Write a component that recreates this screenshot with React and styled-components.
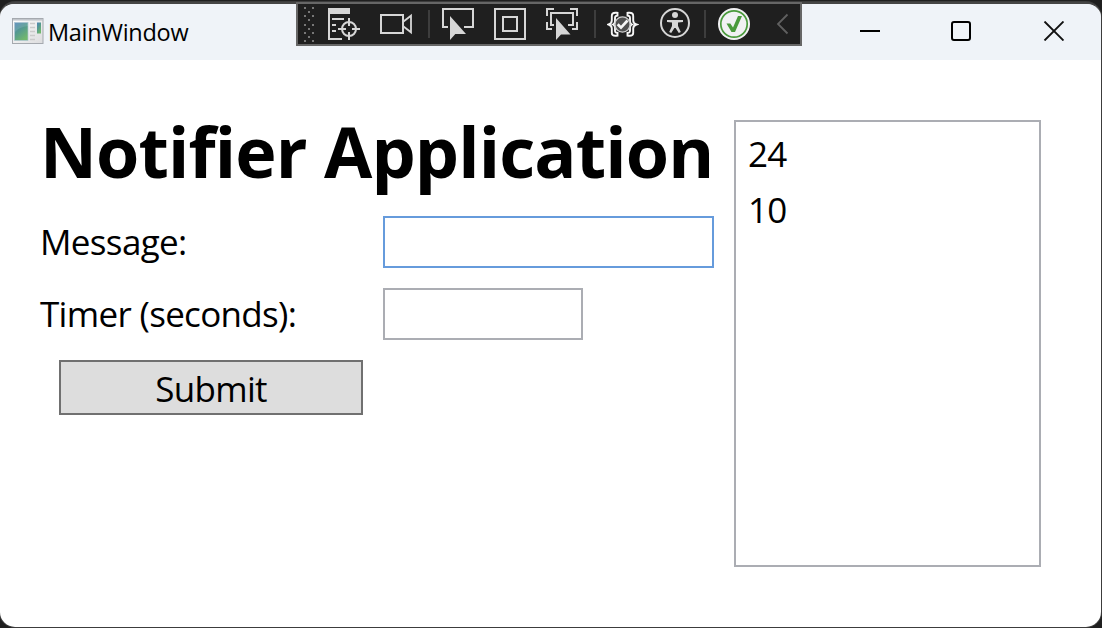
import React from "react";
import styled, { createGlobalStyle } from "styled-components";

const GlobalStyle = createGlobalStyle`
  * { box-sizing: border-box; }
  body {
    margin: 0;
    background: #1f1f1f;
    font-family: "Open Sans", "Noto Sans", sans-serif;
    color: #000;
    overflow: hidden;
  }
`;

const Desktop = styled.div`
  width: 1102px;
  height: 628px;
  padding: 2px 1px 1px 0;
  background: #1f1f1f;
`;

const Window = styled.main`
  position: relative;
  height: 625px;
  border-top: 2px solid #454545;
  border-radius: 15px 15px 15px 15px;
  background: #fff;
  box-shadow: 0 0 0 1px #3c3c3c;
`;

const TitleBar = styled.header`
  display: flex;
  align-items: center;
  justify-content: space-between;
  height: 56px;
  padding: 0 37px 2px 12px;
  background: #eff3f8;
  border-radius: 14px 14px 0 0;
`;

const Caption = styled.div`
  display: flex;
  align-items: center;
  gap: 4px;
`;

const CaptionText = styled.span`
  font-size: 23.5px;
  line-height: 32px;
  padding-top: 2px;
  letter-spacing: ${(p) => p.$spacing}px;
`;

const WindowControls = styled.div`
  display: flex;
  gap: 71px;
  align-items: center;
  svg { display: block; }
`;

const DebugToolbar = styled.div`
  position: absolute;
  left: 296px;
  top: -2px;
  width: 506px;
  height: 44px;
  display: flex;
  align-items: center;
  padding-left: 6px;
  background: #1f1f1f;
  border: 2px solid #666;
`;

const ToolIcon = styled.svg`
  display: block;
  flex: none;
  width: 32px;
  height: 32px;
  margin-left: ${(p) => p.$gap}px;
  fill: none;
  stroke: #d6d6d6;
  stroke-width: 2;
`;

const Divider = styled.span`
  flex: none;
  width: 2px;
  height: 28px;
  margin-left: ${(p) => p.$gap}px;
  background: #3d3d3d;
`;

const Content = styled.section`
  display: flex;
  gap: 20px;
  padding: 43px 60px 0 40px;
`;

const Form = styled.form`
  width: 674px;
`;

const Heading = styled.h1`
  margin: 0 0 17px;
  font-size: 70px;
  line-height: 96px;
  font-weight: 700;
  white-space: nowrap;
  letter-spacing: ${(p) => p.$spacing}px;
`;

const Field = styled.div`
  display: grid;
  grid-template-columns: 343px auto;
  justify-content: start;
  height: 52px;
  margin-bottom: 20px;
`;

const Label = styled.label`
  font-size: 35px;
  line-height: 51px;
  white-space: nowrap;
  letter-spacing: ${(p) => p.$spacing}px;
`;

const TextBox = styled.input`
  width: ${(p) => p.$width}px;
  height: 52px;
  border: 2px solid ${(p) => (p.$active ? "#669bdc" : "#abadb3")};
  border-radius: 0;
  outline: none;
  background: #fff;
  padding: 0 6px;
  font: inherit;
  font-size: 35px;
`;

const SubmitButton = styled.button`
  display: block;
  width: 304px;
  height: 55px;
  margin-left: 19px;
  padding: 2px 0 0;
  border: 2px solid #707070;
  border-radius: 0;
  background: #ddd;
  color: #000;
  font-family: inherit;
  font-size: 35px;
  line-height: 47px;
  letter-spacing: ${(p) => p.$spacing}px;
`;

const ListBox = styled.ul`
  width: 307px;
  height: 447px;
  margin: 17px 0 0;
  padding: 4px 12px;
  border: 2px solid #abadb3;
  list-style: none;
`;

const ListItem = styled.li`
  height: 56px;
  font-size: 35px;
  line-height: 56px;
  letter-spacing: ${(p) => p.$spacing}px;
`;

const gripDots = [];
for (let i = 0; i < 5; i += 1) {
  const y = Math.round(i * 8.25);
  gripDots.push([0, y], [8, y]);
  if (i < 4) gripDots.push([4, y + 4]);
}

function AppIcon() {
  return (
    <svg width="32" height="26" viewBox="0 0 32 26">
      <defs>
        <linearGradient id="screen" x1="0" y1="0" x2="0.6" y2="1">
          <stop offset="0" stopColor="#4f84b8" />
          <stop offset="0.5" stopColor="#559a8f" />
          <stop offset="1" stopColor="#71b86d" />
        </linearGradient>
        <linearGradient id="frame" x1="0" y1="0" x2="1" y2="1">
          <stop offset="0" stopColor="#fff" />
          <stop offset="1" stopColor="#dcdcde" />
        </linearGradient>
      </defs>
      <rect x="0.5" y="0.5" width="30.5" height="25" fill="url(#frame)" stroke="#a5a9af" />
      <path d="M1 1.8H31" stroke="#bcc0c7" strokeWidth="1.4" />
      <rect x="2.5" y="4.5" width="13.5" height="18" fill="url(#screen)" stroke="#b0c8d4" strokeWidth=".7" />
      <path d="M3 14Q7 9 16 8V5H3Z" fill="#fff" opacity=".12" />
      <path d="M18 5.5h5M18 9.5h5M18 13.5h5M18 17.5h5M18 21.5h5" stroke="#cbcbcb" strokeWidth="1.4" />
      <rect x="25" y="4.5" width="4" height="11" fill="url(#screen)" />
    </svg>
  );
}

function Toolbar() {
  return (
    <DebugToolbar>
      <svg width="10" height="35" viewBox="0 0 10 35" fill="#777">
        {gripDots.map(([x, y]) => (
          <rect key={`${x}-${y}`} x={x} y={y} width="2" height="2" />
        ))}
      </svg>
      <ToolIcon $gap={14} viewBox="0 0 32 32">
        <path d="M0 0H22V6H2V30H14V32H0Z" fill="#d6d6d6" stroke="none" />
        <path d="M4 11H16M4 17H8M4 23H8" />
        <circle cx="21" cy="21" r="7" />
        <path d="M10 21H18M24 21H32M21 10V18M21 24V32" />
      </ToolIcon>
      <ToolIcon $gap={20} viewBox="0 0 32 32">
        <rect x="1" y="7" width="22" height="18" />
        <path d="M23.5 13.5L31 7.7V24.3L23.5 18.5" strokeWidth="1.8" />
      </ToolIcon>
      <Divider $gap={16} />
      <ToolIcon $gap={12} viewBox="0 0 32 32">
        <path d="M6 19H1V1H31V19H22" />
        <path d="M8 8V32L13.3 25.9H24Z" fill="#d6d6d6" stroke="none" />
      </ToolIcon>
      <ToolIcon $gap={20} viewBox="0 0 32 32">
        <rect x="1" y="1" width="30" height="30" />
        <rect x="9" y="9" width="14" height="14" />
      </ToolIcon>
      <ToolIcon $gap={20} viewBox="0 0 32 32">
        <path d="M8 1H1V8M24 1H31V8M1 14V21H6M31 14V21H26" />
        <path d="M8 17H5V5H27V17H22" />
        <path d="M10 10V32L15 26.5H24.5Z" fill="#d6d6d6" stroke="none" />
      </ToolIcon>
      <Divider $gap={16} />
      <ToolIcon $gap={11} viewBox="0 0 32 32">
        <g stroke="#f6f6f6">
          <path d="M10.5 4.8H8.5Q4.8 4.8 4.8 8V12.5Q4.8 15.5 1.5 16.5Q4.8 17.5 4.8 20.5V25Q4.8 27.8 8.5 27.8H10.5M10.5 7.8Q8 7.6 8 10V13.5Q8 15.5 6 16.5Q8 17.5 8 19.5V22.5Q8 25 10.5 24.8M10.5 4V8.6M10.5 24V28.6" strokeWidth="1.9" />
          <path d="M20.5 4.8H22.5Q26.2 4.8 26.2 8V12.5Q26.2 15.5 29.5 16.5Q26.2 17.5 26.2 20.5V25Q26.2 27.8 22.5 27.8H20.5M20.5 7.8Q23 7.6 23 10V13.5Q23 15.5 25 16.5Q23 17.5 23 19.5V22.5Q23 25 20.5 24.8M20.5 4V8.6M20.5 24V28.6" strokeWidth="1.9" />
          <circle cx="15.5" cy="16.5" r="7.6" fill="#505050" stroke="#d0d0d0" strokeWidth="1.4" />
          <path d="M10.7 16.2L14 19.6L20.5 12.5" strokeWidth="2.7" />
        </g>
      </ToolIcon>
      <ToolIcon $gap={20} viewBox="0 0 32 32">
        <circle cx="16" cy="15" r="14" />
        <circle cx="16" cy="7" r="3" fill="#d6d6d6" stroke="none" />
        <path d="M8 12H24V14L19 14.6V18L21.8 24L19.8 25L16.6 20H15.4L12.2 25L10.2 24L13 18V14.6L8 14Z" fill="#d6d6d6" stroke="none" />
      </ToolIcon>
      <Divider $gap={13} />
      <ToolIcon $gap={12} viewBox="0 0 32 32">
        <circle cx="16" cy="16" r="16" fill="#f1f1f3" stroke="none" />
        <circle cx="16" cy="16" r="13.2" stroke="#4a9a3c" strokeWidth="1.7" />
        <path d="M8.5 15.5H12.3L15 19.5L20 8H24L17 24H13.5Z" fill="#4a9a3c" stroke="none" />
      </ToolIcon>
      <ToolIcon $gap={16} viewBox="0 0 32 32">
        <path d="M21.5 6.5L12 16L21.5 25.5" stroke="#606060" strokeWidth="1.8" />
      </ToolIcon>
    </DebugToolbar>
  );
}

export default function App() {
  return (
    <>
      <GlobalStyle />
      <Desktop>
        <Window>
          <TitleBar>
            <Caption>
              <AppIcon />
              <CaptionText $spacing={-0.3}>MainWindow</CaptionText>
            </Caption>
            <WindowControls>
              <svg width="20" height="20" viewBox="0 0 20 20">
                <path d="M0 10H20" stroke="#000" strokeWidth="2" />
              </svg>
              <svg width="20" height="20" viewBox="0 0 20 20">
                <rect x="1" y="1" width="18" height="18" rx="2" fill="none" stroke="#000" strokeWidth="2" />
              </svg>
              <svg width="22" height="20" viewBox="0 0 22 20">
                <path d="M2.5 .5L21.5 19.5M21.5 .5L2.5 19.5" stroke="#111" strokeWidth="1.9" />
              </svg>
            </WindowControls>
          </TitleBar>
          <Content>
            <Form onSubmit={(e) => e.preventDefault()}>
              <Heading $spacing={-0.87}>Notifier Application</Heading>
              <Field>
                <Label htmlFor="message" $spacing={-0.65}>Message:</Label>
                <TextBox id="message" $width={331} $active />
              </Field>
              <Field>
                <Label htmlFor="timer" $spacing={-0.68}>Timer (seconds):</Label>
                <TextBox id="timer" $width={200} />
              </Field>
              <SubmitButton $spacing={-0.7}>Submit</SubmitButton>
            </Form>
            <ListBox>
              <ListItem $spacing={-0.8}>24</ListItem>
              <ListItem $spacing={-0.8}>10</ListItem>
            </ListBox>
          </Content>
          <Toolbar />
        </Window>
      </Desktop>
    </>
  );
}
